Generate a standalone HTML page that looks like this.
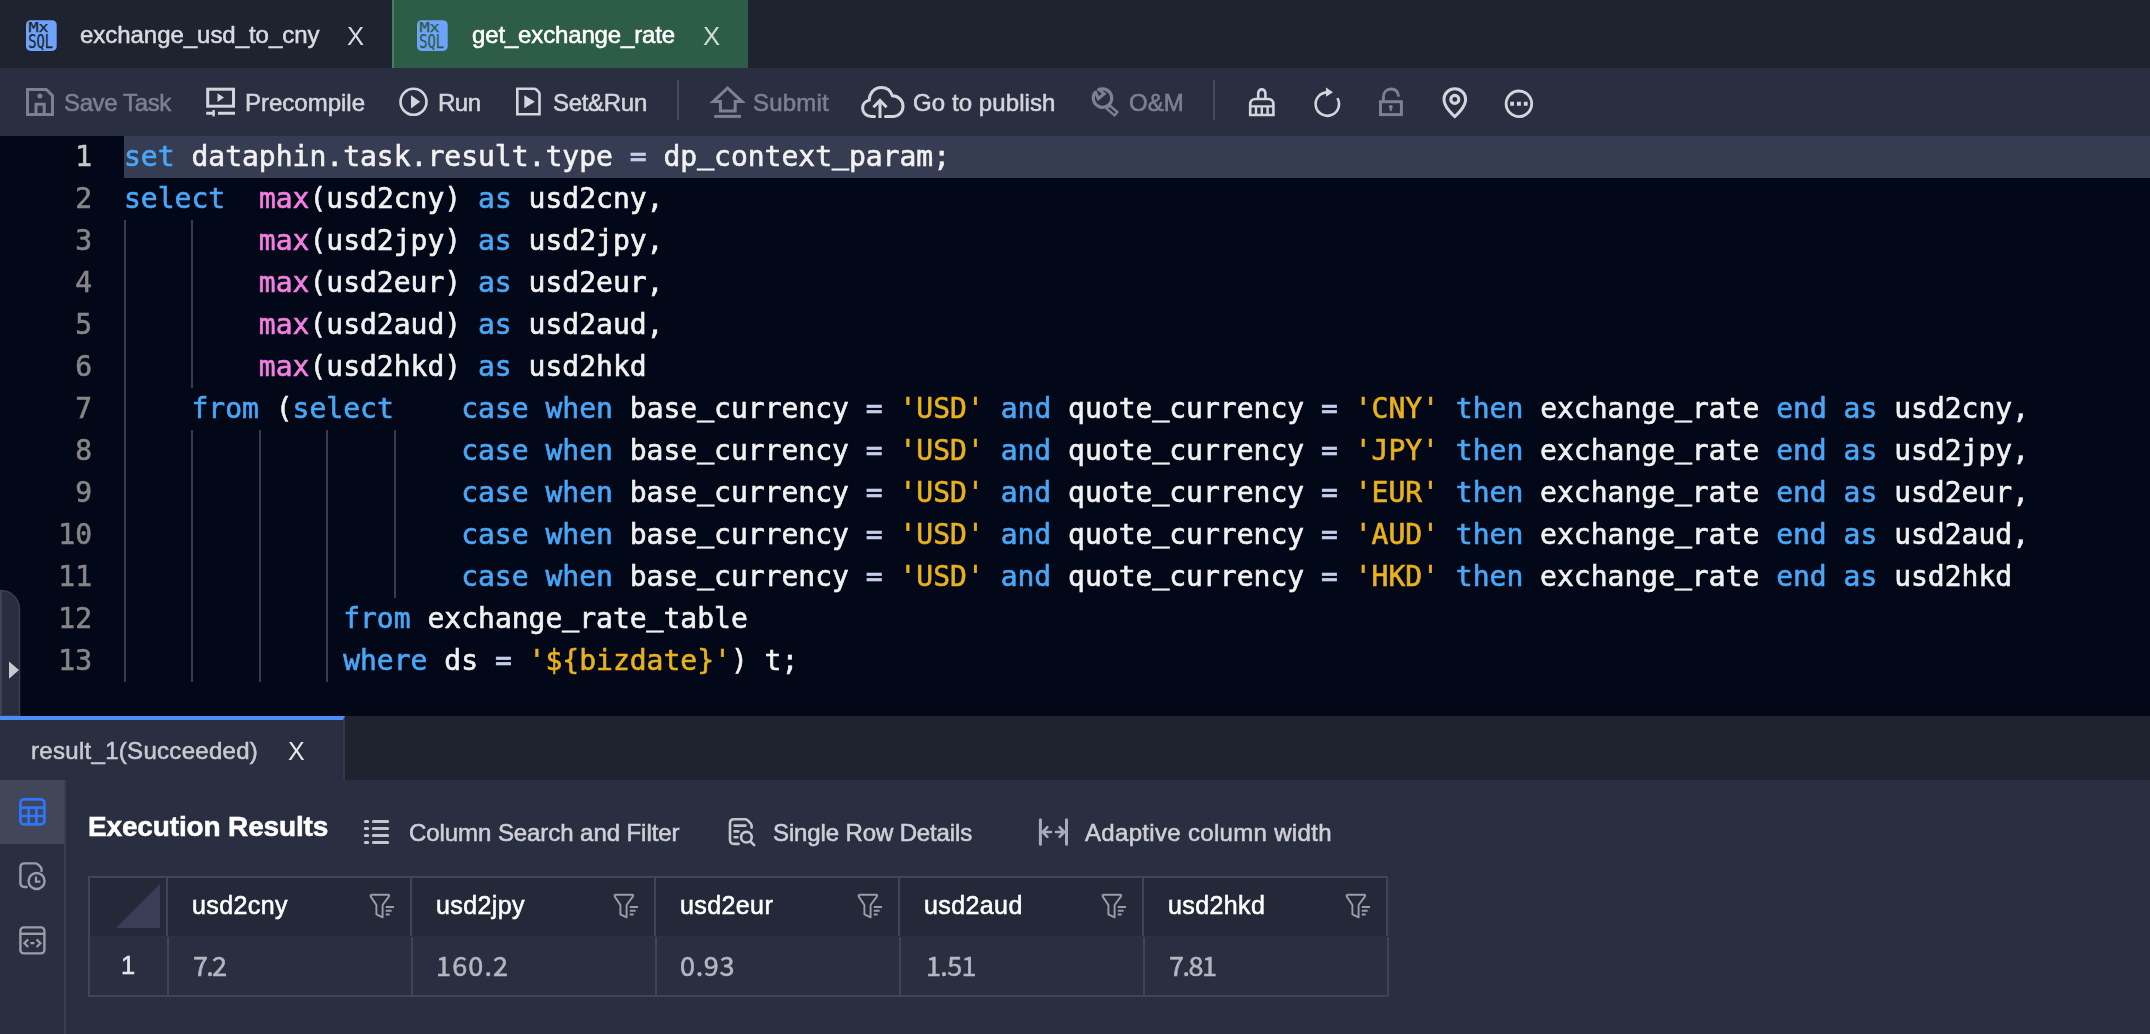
<!DOCTYPE html>
<html lang="en">
<head>
<meta charset="utf-8">
<title>get_exchange_rate</title>
<style>
*{box-sizing:border-box;margin:0;padding:0}
html,body{width:2150px;height:1034px;overflow:hidden;background:#030819}
body{position:relative;font-family:"Liberation Sans","Noto Sans CJK SC",sans-serif;color:#d6d7dc}
.abs{position:absolute}
.t,.cl,.ln{will-change:transform}
.t{position:absolute;white-space:pre;line-height:1;-webkit-text-stroke:0.55px currentColor}
.x{-webkit-text-stroke:0}
svg{position:absolute;overflow:visible}

/* ---------- file tab bar ---------- */
#tabs{left:0;top:0;width:2150px;height:68px;background:#1f232f}
#tab2{left:392px;top:0;width:356px;height:68px;background:#2d5d46;border-left:2px solid #4b7c64}

/* ---------- toolbar ---------- */
#toolbar{left:0;top:68px;width:2150px;height:68px;background:#292e41}
.dv{font-family:"Noto Sans CJK SC","Liberation Sans",sans-serif}
.sep{width:2px;height:40px;top:80px;background:#464959}

/* ---------- editor ---------- */
#editor{left:0;top:136px;width:2150px;height:580px;background:#030819}
#curline{left:124px;top:0;width:2026px;height:42px;background:#363d53}
.ln{position:absolute;left:0;width:92px;text-align:right;height:42px;line-height:42px;font:28px/42px "DejaVu Sans Mono","Liberation Mono",monospace;color:#868686}
.cl{position:absolute;left:124px;height:42px;white-space:pre;font:28px/42px "DejaVu Sans Mono","Liberation Mono",monospace;color:#f2f2f2;letter-spacing:0}
.cl,.ln{-webkit-text-stroke:0.6px currentColor}
.u{position:relative;top:-3px;-webkit-text-stroke:0.9px currentColor}
.k{color:#49a7f8}.f{color:#f47fe0}.s{color:#e9b11c}.o{color:#c6cdec}
.g{position:absolute;width:2px;background:#363b50}

/* ---------- result area ---------- */
#rtabs{left:0;top:716px;width:2150px;height:64px;background:#1f232f}
#rtab{left:0;top:0;width:345px;height:64px;background:#292e41;border-top:4px solid #4a8ef5;border-right:2px solid #343748}
#panel{left:0;top:780px;width:2150px;height:254px;background:#292e41}
#side{left:0;top:0;width:66px;height:254px;border-right:2px solid #3a3d50}
#sideact{left:0;top:0;width:64px;height:64px;background:#424659}
</style>
</head>
<body>
<div id="tabs" class="abs">
  <div id="tab2" class="abs"></div>
  <svg style="left:26px;top:19.5px" width="31" height="31" viewBox="0 0 31 31"><rect x="0" y="0.2" width="30.7" height="30.7" rx="4.5" fill="#6ea3f9"/><text x="2.4" y="12.3" font-family="DejaVu Sans Mono,Liberation Mono,monospace" font-size="13.6" fill="#1f232f" stroke="#1f232f" stroke-width="0.25" textLength="20.4" lengthAdjust="spacingAndGlyphs">Mx</text><text x="2.2" y="28.4" font-family="DejaVu Sans Mono,Liberation Mono,monospace" font-size="19" fill="#1f232f" stroke="#1f232f" stroke-width="0.25" textLength="25" lengthAdjust="spacingAndGlyphs">SQL</text></svg>
  <div class="t" id="tt1" style="left:80px;top:22.5px;font-size:24px;color:#d9dadf;letter-spacing:-0.04px">exchange_usd_to_cny</div>
  <div class="t x" id="x1" style="left:347.4px;top:23.6px;font-size:25.6px;color:#d9dadf">X</div>
  <svg style="left:417px;top:19.5px" width="31" height="31" viewBox="0 0 31 31"><rect x="0" y="0.2" width="30.7" height="30.7" rx="4.5" fill="#6ea3f9"/><text x="2.4" y="12.3" font-family="DejaVu Sans Mono,Liberation Mono,monospace" font-size="13.6" fill="#2d5d46" stroke="#2d5d46" stroke-width="0.25" textLength="20.4" lengthAdjust="spacingAndGlyphs">Mx</text><text x="2.2" y="28.4" font-family="DejaVu Sans Mono,Liberation Mono,monospace" font-size="19" fill="#2d5d46" stroke="#2d5d46" stroke-width="0.25" textLength="25" lengthAdjust="spacingAndGlyphs">SQL</text></svg>
  <div class="t" id="tt2" style="left:471.5px;top:22.5px;font-size:24px;color:#ffffff;letter-spacing:-0.15px">get_exchange_rate</div>
  <div class="t x" id="x2" style="left:703.2px;top:23.6px;font-size:25.6px;color:#cfddd5">X</div>
</div>
<div id="toolbar" class="abs"></div>
<!-- save -->
<svg style="left:26px;top:88px" width="28" height="28" viewBox="0 0 28 28"><path d="M1.5 1.5H20.3L26.5 7.7V26.5H1.5Z" fill="none" stroke="#7d808e" stroke-width="3"/><path d="M10 26V16.2H18.2V26" fill="none" stroke="#7d808e" stroke-width="3"/><circle cx="13.9" cy="8" r="2.5" fill="#7d808e"/></svg>
<div class="t" id="b1" style="left:64px;top:91px;font-size:24px;color:#7d808e;letter-spacing:-0.37px">Save Task</div>
<!-- precompile -->
<svg style="left:206px;top:87px" width="30" height="31" viewBox="0 0 30 31"><rect x="1.7" y="2.2" width="25.8" height="17" fill="none" stroke="#d4d5db" stroke-width="3"/><path d="M11.5 6.2L18 10.6L11.5 15Z" fill="#d4d5db"/><path d="M0.2 26.2H8.6M12 26.2H29" stroke="#d4d5db" stroke-width="3" fill="none"/><path d="M7.6 23V29.4" stroke="#d4d5db" stroke-width="2.4" fill="none"/></svg>
<div class="t" id="b2" style="left:245px;top:91px;font-size:24px;color:#d4d5db">Precompile</div>
<!-- run -->
<svg style="left:399px;top:87px" width="30" height="30" viewBox="0 0 30 30"><circle cx="14.5" cy="14.8" r="13" fill="none" stroke="#d4d5db" stroke-width="2.6"/><path d="M12 8.2L21.2 14.8L12 21.4Z" fill="#d4d5db"/></svg>
<div class="t" id="b3" style="left:438px;top:91px;font-size:24px;color:#d4d5db;letter-spacing:-0.5px">Run</div>
<!-- set&run -->
<svg style="left:516px;top:87px" width="26" height="30" viewBox="0 0 26 30"><path d="M1.3 1.8H18.5Q19.5 1.8 20.2 2.5L22.8 5.1Q23.5 5.8 23.5 6.8V27.3H1.3Z" fill="none" stroke="#d4d5db" stroke-width="2.6" stroke-linejoin="miter"/><path d="M8.3 8.2L18.9 14.7L8.3 21.2Z" fill="#d4d5db"/></svg>
<div class="t" id="b4" style="left:552.5px;top:91px;font-size:24px;color:#d4d5db;letter-spacing:-0.3px">Set&amp;Run</div>
<div class="abs sep" style="left:677px"></div>
<!-- submit -->
<svg style="left:710px;top:85px" width="36" height="34" viewBox="0 0 36 34"><path d="M17.6 3L32 16.6H25.2V26H10.4V16.6H3.2Z" fill="none" stroke="#7d808e" stroke-width="3" stroke-linejoin="miter"/><path d="M4.2 31.4H31" stroke="#7d808e" stroke-width="3"/></svg>
<div class="t" id="b5" style="left:753px;top:91px;font-size:24px;color:#7d808e;letter-spacing:0.2px">Submit</div>
<!-- cloud -->
<svg style="left:861px;top:85px" width="44" height="34" viewBox="0 0 44 34"><path d="M13.5 31.5H10.5C5.5 31.5 1.6 27.8 1.6 23.2C1.6 19.2 4.4 16 8.2 15.1C8.6 7.9 13.6 2.4 20.2 2.4C25.6 2.4 29.8 5.8 31.4 10.8C37.4 10.8 42 15.4 42 21.2C42 27 37.6 31.5 32 31.5H24.5" fill="none" stroke="#d4d5db" stroke-width="3" stroke-linecap="round"/><path d="M19 33V15.5M12.4 22.2L19 15.5L25.6 22.2" fill="none" stroke="#d4d5db" stroke-width="3"/></svg>
<div class="t" id="b6" style="left:913px;top:91px;font-size:24px;color:#d4d5db;letter-spacing:0.08px">Go to publish</div>
<!-- O&M wrench -->
<svg style="left:1084px;top:80px" width="44" height="44" viewBox="0 0 44 44"><path d="M14.04 10.05A9.2 9.2 0 1 1 11.66 11.94" fill="none" stroke="#7d808e" stroke-width="3.3"/><path d="M11.06 10.94L14.3 18.7L20.2 13.7L13.84 8.85" fill="none" stroke="#7d808e" stroke-width="3" stroke-linejoin="miter"/><rect x="-5.2" y="-2.2" width="10.4" height="4.4" transform="translate(28 30.3) rotate(41)" fill="none" stroke="#7d808e" stroke-width="2.4"/></svg>
<div class="t" id="b7" style="left:1129px;top:91px;font-size:24px;color:#7d808e">O&amp;M</div>
<div class="abs sep" style="left:1213px"></div>
<!-- brush -->
<svg style="left:1248px;top:87px" width="28" height="30" viewBox="0 0 28 30"><path d="M10.2 12V6.2C10.2 4 11.8 2.4 13.8 2.4C15.8 2.4 17.4 4 17.4 6.2V12" fill="none" stroke="#d4d5db" stroke-width="2.6"/><path d="M2.2 28V17.2C2.2 14.2 4.4 12 7.4 12H20.2C23.2 12 25.4 14.2 25.4 17.2V28Z" fill="none" stroke="#d4d5db" stroke-width="2.6"/><path d="M2.2 19.4H25.4M8 19.4V28M13.8 19.4V28M19.6 19.4V28" stroke="#d4d5db" stroke-width="2.4" fill="none"/></svg>
<!-- refresh -->
<svg style="left:1313px;top:86.6px" width="28" height="30" viewBox="0 0 28 30"><path d="M14.4 5.4A11.7 11.7 0 1 0 24.4 11.2" fill="none" stroke="#d4d5db" stroke-width="2.6"/><path d="M13 0.6L20 5.2L13 9.8Z" fill="#d4d5db"/></svg>
<!-- lock -->
<svg style="left:1378px;top:87px" width="26" height="30" viewBox="0 0 26 30"><rect x="2.5" y="14.7" width="20.9" height="12.9" fill="none" stroke="#7d808e" stroke-width="3"/><path d="M5.4 14.5V10C5.4 5 8.6 2 13 2C17.2 2 20.2 4.8 20.6 9.6" fill="none" stroke="#7d808e" stroke-width="2.8"/><circle cx="12.8" cy="19.9" r="2" fill="#7d808e"/><path d="M12.8 20V24.1" stroke="#7d808e" stroke-width="2"/></svg>
<!-- pin -->
<svg style="left:1442px;top:86.6px" width="26" height="32" viewBox="0 0 26 32"><path d="M12.8 29.6C12.8 29.6 2 20.6 2 12.4C2 6.4 6.8 1.8 12.8 1.8C18.8 1.8 23.6 6.4 23.6 12.4C23.6 20.6 12.8 29.6 12.8 29.6Z" fill="none" stroke="#d4d5db" stroke-width="3" stroke-linejoin="miter"/><circle cx="12.8" cy="12.4" r="4" fill="none" stroke="#d4d5db" stroke-width="3.1"/></svg>
<!-- more -->
<svg style="left:1504px;top:89px" width="30" height="30" viewBox="0 0 30 30"><circle cx="14.9" cy="14.8" r="12.8" fill="none" stroke="#d4d5db" stroke-width="2.8"/><path d="M6.2 14.8H10M12.9 14.8H16.9M19.8 14.8H23.6" stroke="#d4d5db" stroke-width="4" fill="none"/></svg>

<div id="editor" class="abs">
<div id="curline" class="abs"></div>
<div class="ln" style="top:0px;color:#c8c8c8">1</div><div class="cl" style="top:0px"><span class="k">set</span> dataphin.task.result.type <span class="o">=</span> dp<span class="u">_</span>context<span class="u">_</span>param;</div>
<div class="ln" style="top:42px;color:#868686">2</div><div class="cl" style="top:42px"><span class="k">select</span>  <span class="f">max</span>(usd2cny) <span class="k">as</span> usd2cny,</div>
<div class="ln" style="top:84px;color:#868686">3</div><div class="cl" style="top:84px">        <span class="f">max</span>(usd2jpy) <span class="k">as</span> usd2jpy,</div>
<div class="ln" style="top:126px;color:#868686">4</div><div class="cl" style="top:126px">        <span class="f">max</span>(usd2eur) <span class="k">as</span> usd2eur,</div>
<div class="ln" style="top:168px;color:#868686">5</div><div class="cl" style="top:168px">        <span class="f">max</span>(usd2aud) <span class="k">as</span> usd2aud,</div>
<div class="ln" style="top:210px;color:#868686">6</div><div class="cl" style="top:210px">        <span class="f">max</span>(usd2hkd) <span class="k">as</span> usd2hkd</div>
<div class="ln" style="top:252px;color:#868686">7</div><div class="cl" style="top:252px">    <span class="k">from</span> (<span class="k">select</span>    <span class="k">case</span> <span class="k">when</span> base<span class="u">_</span>currency <span class="o">=</span> <span class="s">'USD'</span> <span class="k">and</span> quote<span class="u">_</span>currency <span class="o">=</span> <span class="s">'CNY'</span> <span class="k">then</span> exchange<span class="u">_</span>rate <span class="k">end</span> <span class="k">as</span> usd2cny,</div>
<div class="ln" style="top:294px;color:#868686">8</div><div class="cl" style="top:294px">                    <span class="k">case</span> <span class="k">when</span> base<span class="u">_</span>currency <span class="o">=</span> <span class="s">'USD'</span> <span class="k">and</span> quote<span class="u">_</span>currency <span class="o">=</span> <span class="s">'JPY'</span> <span class="k">then</span> exchange<span class="u">_</span>rate <span class="k">end</span> <span class="k">as</span> usd2jpy,</div>
<div class="ln" style="top:336px;color:#868686">9</div><div class="cl" style="top:336px">                    <span class="k">case</span> <span class="k">when</span> base<span class="u">_</span>currency <span class="o">=</span> <span class="s">'USD'</span> <span class="k">and</span> quote<span class="u">_</span>currency <span class="o">=</span> <span class="s">'EUR'</span> <span class="k">then</span> exchange<span class="u">_</span>rate <span class="k">end</span> <span class="k">as</span> usd2eur,</div>
<div class="ln" style="top:378px;color:#868686">10</div><div class="cl" style="top:378px">                    <span class="k">case</span> <span class="k">when</span> base<span class="u">_</span>currency <span class="o">=</span> <span class="s">'USD'</span> <span class="k">and</span> quote<span class="u">_</span>currency <span class="o">=</span> <span class="s">'AUD'</span> <span class="k">then</span> exchange<span class="u">_</span>rate <span class="k">end</span> <span class="k">as</span> usd2aud,</div>
<div class="ln" style="top:420px;color:#868686">11</div><div class="cl" style="top:420px">                    <span class="k">case</span> <span class="k">when</span> base<span class="u">_</span>currency <span class="o">=</span> <span class="s">'USD'</span> <span class="k">and</span> quote<span class="u">_</span>currency <span class="o">=</span> <span class="s">'HKD'</span> <span class="k">then</span> exchange<span class="u">_</span>rate <span class="k">end</span> <span class="k">as</span> usd2hkd</div>
<div class="ln" style="top:462px;color:#868686">12</div><div class="cl" style="top:462px">             <span class="k">from</span> exchange<span class="u">_</span>rate<span class="u">_</span>table</div>
<div class="ln" style="top:504px;color:#868686">13</div><div class="cl" style="top:504px">             <span class="k">where</span> ds <span class="o">=</span> <span class="s">'${bizdate}'</span>) t;</div>
<div class="g" style="left:124.0px;top:84px;height:462px"></div>
<div class="g" style="left:191.4px;top:84px;height:168px"></div>
<div class="g" style="left:191.4px;top:294px;height:252px"></div>
<div class="g" style="left:258.8px;top:294px;height:252px"></div>
<div class="g" style="left:326.3px;top:294px;height:252px"></div>
<div class="g" style="left:393.7px;top:294px;height:168px"></div>
<svg style="left:0;top:454px" width="22" height="126" viewBox="0 0 22 126"><path d="M0 0.5C11 0.5 19.5 8 19.5 20V126H0Z" fill="#292d3f" stroke="#3b3f51" stroke-width="1.4"/><rect x="0" y="1" width="1.9" height="125" fill="#3f4354"/><path d="M9 71.4L19 80L9 88.7Z" fill="#c9cad1"/></svg>
</div>
<div id="rtabs" class="abs"><div id="rtab" class="abs"></div></div>
<div class="t" id="r1" style="left:31px;top:739px;font-size:24px;color:#c9cad1;letter-spacing:0.3px">result_1(Succeeded)</div>
<div class="t x" id="x3" style="left:288.3px;top:738.6px;font-size:25px;color:#e8e8ec">X</div>
<div id="panel" class="abs"><div id="side" class="abs"><div id="sideact" class="abs"></div></div></div>
<!-- side icons -->
<svg style="left:19px;top:798px" width="27" height="28" viewBox="0 0 27 28"><rect x="1.4" y="1.4" width="24" height="25" rx="3.4" fill="none" stroke="#2f76ff" stroke-width="2.6"/><path d="M1.4 9.6H25.4M1.4 18H25.4M9.6 9.6V26.4M17.4 9.6V26.4" stroke="#2f76ff" stroke-width="2.6" fill="none"/></svg>
<svg style="left:19px;top:862px" width="28" height="29" viewBox="0 0 28 29"><path d="M7.6 25H5.4Q1.4 25 1.4 21V5.4Q1.4 1.4 5.4 1.4H16.2Q18 1.4 19.2 2.6L21.6 5Q22.6 6.2 22.6 7.8V9" fill="none" stroke="#9b9da8" stroke-width="2.4" stroke-linecap="round"/><circle cx="17.6" cy="19" r="8" fill="none" stroke="#9b9da8" stroke-width="2.4"/><path d="M17 14.6V19.6H21.4" fill="none" stroke="#9b9da8" stroke-width="2.2"/></svg>
<svg style="left:19px;top:926px" width="27" height="29" viewBox="0 0 27 29"><rect x="1.4" y="1.4" width="24" height="26" rx="3.4" fill="none" stroke="#9b9da8" stroke-width="2.4"/><path d="M1.4 7.8H25.4" stroke="#9b9da8" stroke-width="2.4"/><path d="M9.2 13.4L5.4 17.2L9.2 21M17.6 13.4L21.4 17.2L17.6 21M11.4 17.2H15.4" fill="none" stroke="#9b9da8" stroke-width="2.2"/></svg>
<!-- heading row -->
<div class="t" id="h0" style="left:88px;top:813px;font-size:28px;font-weight:bold;color:#ffffff;letter-spacing:-0.15px">Execution Results</div>
<svg style="left:363px;top:819px" width="28" height="26" viewBox="0 0 28 26"><path d="M2.4 2.5H4.6M10.4 2.5H24.6M2.4 9.5H4.6M10.4 9.5H24.6M2.4 16.5H4.6M10.4 16.5H24.6M2.4 23.5H4.6M10.4 23.5H24.6" stroke="#c4c5cd" stroke-width="3.2" stroke-linecap="round" fill="none"/></svg>
<div class="t" id="h1" style="left:408.5px;top:820.5px;font-size:24px;color:#cfd0d7;letter-spacing:-0.07px">Column Search and Filter</div>
<svg style="left:728px;top:817px" width="28" height="30" viewBox="0 0 28 30"><path d="M10.6 26.9H6Q2 26.9 2 22.9V6.2Q2 2.2 6 2.2H17Q18.4 2.2 19.4 3.2L22.4 6.2Q23.6 7.4 23.6 9V10.6" fill="none" stroke="#c4c5cd" stroke-width="2.6" stroke-linecap="round"/><path d="M6.6 8.6H17.4M6.6 14.4H10.4M6.6 20.3H9.4" stroke="#c4c5cd" stroke-width="2.6" stroke-linecap="round" fill="none"/><circle cx="18.4" cy="20.2" r="5.3" fill="none" stroke="#c4c5cd" stroke-width="2.6"/><path d="M22.4 24.4L26.2 28.2" stroke="#c4c5cd" stroke-width="2.6" stroke-linecap="round"/></svg>
<div class="t" id="h2" style="left:773px;top:820.5px;font-size:24px;color:#cfd0d7;letter-spacing:-0.13px">Single Row Details</div>
<svg style="left:1038px;top:818px" width="32" height="28" viewBox="0 0 32 28"><path d="M2.4 1.8V26.2M28.5 1.8V26.2" stroke="#a9abb6" stroke-width="3" stroke-linecap="round" fill="none"/><path d="M5 14H13M9.4 9.2L4.8 14L9.4 18.8M18 14H26M21.6 9.2L26.2 14L21.6 18.8" stroke="#a9abb6" stroke-width="2.6" stroke-linecap="round" stroke-linejoin="round" fill="none"/></svg>
<div class="t" id="h3" style="left:1085px;top:820.5px;font-size:24px;color:#cfd0d7;letter-spacing:0.32px">Adaptive column width</div>
<!-- table -->
<div class="abs" style="left:88px;top:877px;width:1300px;height:59px;background:#24293a"></div>
<div class="abs" style="left:88px;top:876px;width:1300px;height:2px;background:#404453"></div>
<div class="abs" style="left:88px;top:995px;width:1300px;height:2px;background:#404453"></div>
<div class="abs" style="left:88px;top:877px;width:2px;height:120px;background:#404453"></div>
<svg style="left:116px;top:884px" width="45" height="45" viewBox="0 0 45 45"><path d="M44 0V44H0Z" fill="#3b3e56"/></svg>
<div class="t" id="rn" style="left:121px;top:953px;font-size:25.5px;color:#e4e5ea">1</div>
<div class="abs" style="left:166px;top:877px;width:2px;height:59px;background:#404453"></div><div class="abs" style="left:167px;top:937px;width:2px;height:59px;background:#404453"></div>
<div class="t hc" id="c0" style="left:192px;top:893px;font-size:25px;color:#ffffff;letter-spacing:0.4px">usd2cny</div><svg style="left:369px;top:892px" width="26" height="28" viewBox="0 0 26 28"><path d="M3 2.8H19Q21 2.8 19.8 4.6L13.6 13V25.4L7.4 22.4V13L1.8 4.6Q0.8 2.8 3 2.8Z" fill="none" stroke="#9a9ca8" stroke-width="1.9" stroke-linejoin="round"/><path d="M16.8 15H25M16.8 18.7H22.6M16.8 22.6H20.6" stroke="#9a9ca8" stroke-width="2" fill="none"/></svg><div class="t dv" id="v0" style="left:192.5px;top:951px;font-size:27px;color:#b4b6c0;letter-spacing:-1.75px">7.2</div>
<div class="abs" style="left:410px;top:877px;width:2px;height:59px;background:#404453"></div><div class="abs" style="left:411px;top:937px;width:2px;height:59px;background:#404453"></div>
<div class="t hc" id="c1" style="left:436px;top:893px;font-size:25px;color:#ffffff;letter-spacing:0.4px">usd2jpy</div><svg style="left:613px;top:892px" width="26" height="28" viewBox="0 0 26 28"><path d="M3 2.8H19Q21 2.8 19.8 4.6L13.6 13V25.4L7.4 22.4V13L1.8 4.6Q0.8 2.8 3 2.8Z" fill="none" stroke="#9a9ca8" stroke-width="1.9" stroke-linejoin="round"/><path d="M16.8 15H25M16.8 18.7H22.6M16.8 22.6H20.6" stroke="#9a9ca8" stroke-width="2" fill="none"/></svg><div class="t dv" id="v1" style="left:436px;top:951px;font-size:27px;color:#b4b6c0;letter-spacing:1.15px">160.2</div>
<div class="abs" style="left:654px;top:877px;width:2px;height:59px;background:#404453"></div><div class="abs" style="left:655px;top:937px;width:2px;height:59px;background:#404453"></div>
<div class="t hc" id="c2" style="left:680px;top:893px;font-size:25px;color:#ffffff;letter-spacing:0.4px">usd2eur</div><svg style="left:857px;top:892px" width="26" height="28" viewBox="0 0 26 28"><path d="M3 2.8H19Q21 2.8 19.8 4.6L13.6 13V25.4L7.4 22.4V13L1.8 4.6Q0.8 2.8 3 2.8Z" fill="none" stroke="#9a9ca8" stroke-width="1.9" stroke-linejoin="round"/><path d="M16.8 15H25M16.8 18.7H22.6M16.8 22.6H20.6" stroke="#9a9ca8" stroke-width="2" fill="none"/></svg><div class="t dv" id="v2" style="left:680px;top:951px;font-size:27px;color:#b4b6c0;letter-spacing:0.67px">0.93</div>
<div class="abs" style="left:898px;top:877px;width:2px;height:59px;background:#404453"></div><div class="abs" style="left:899px;top:937px;width:2px;height:59px;background:#404453"></div>
<div class="t hc" id="c3" style="left:924px;top:893px;font-size:25px;color:#ffffff;letter-spacing:0.4px">usd2aud</div><svg style="left:1101px;top:892px" width="26" height="28" viewBox="0 0 26 28"><path d="M3 2.8H19Q21 2.8 19.8 4.6L13.6 13V25.4L7.4 22.4V13L1.8 4.6Q0.8 2.8 3 2.8Z" fill="none" stroke="#9a9ca8" stroke-width="1.9" stroke-linejoin="round"/><path d="M16.8 15H25M16.8 18.7H22.6M16.8 22.6H20.6" stroke="#9a9ca8" stroke-width="2" fill="none"/></svg><div class="t dv" id="v3" style="left:925.5px;top:951px;font-size:27px;color:#b4b6c0;letter-spacing:-0.67px">1.51</div>
<div class="abs" style="left:1142px;top:877px;width:2px;height:59px;background:#404453"></div><div class="abs" style="left:1143px;top:937px;width:2px;height:59px;background:#404453"></div>
<div class="t hc" id="c4" style="left:1168px;top:893px;font-size:25px;color:#ffffff;letter-spacing:0.4px">usd2hkd</div><svg style="left:1345px;top:892px" width="26" height="28" viewBox="0 0 26 28"><path d="M3 2.8H19Q21 2.8 19.8 4.6L13.6 13V25.4L7.4 22.4V13L1.8 4.6Q0.8 2.8 3 2.8Z" fill="none" stroke="#9a9ca8" stroke-width="1.9" stroke-linejoin="round"/><path d="M16.8 15H25M16.8 18.7H22.6M16.8 22.6H20.6" stroke="#9a9ca8" stroke-width="2" fill="none"/></svg><div class="t dv" id="v4" style="left:1169px;top:951px;font-size:27px;color:#b4b6c0;letter-spacing:-1.5px">7.81</div>
<div class="abs" style="left:1386px;top:877px;width:2px;height:59px;background:#404453"></div><div class="abs" style="left:1387px;top:937px;width:2px;height:59px;background:#404453"></div>

</body>
</html>
